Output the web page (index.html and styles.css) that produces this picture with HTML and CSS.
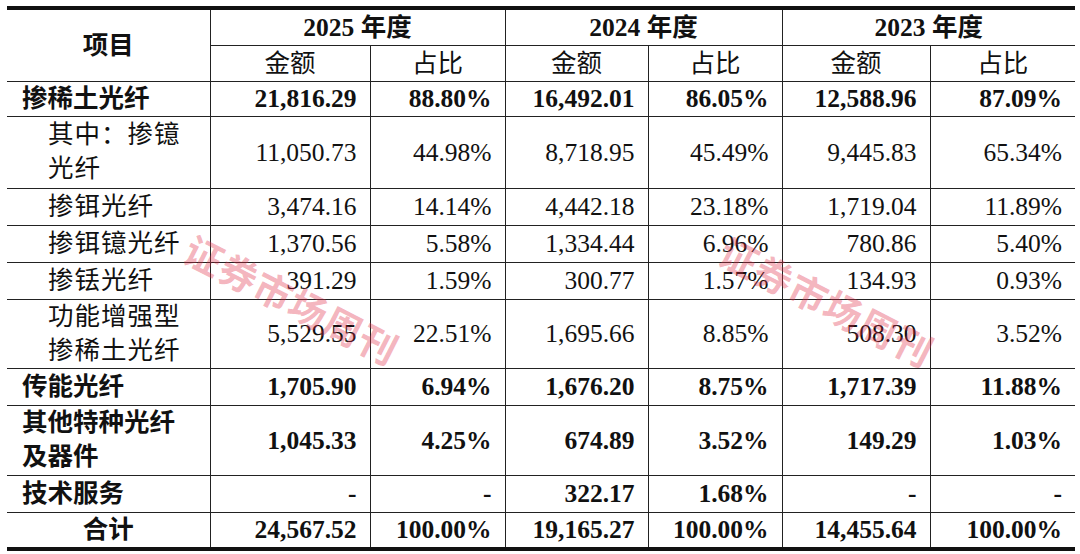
FILE: index.html
```html
<!DOCTYPE html>
<html lang="zh-CN">
<head>
    <meta charset="UTF-8" />
    <meta name="viewport" content="width=device-width, initial-scale=1.0" />
    <title>主营业务收入构成</title>
    <link rel="stylesheet" href="styles.css">
</head>
<body>

<div class="sheet">
    <table class="revenue">
        <colgroup>
            <col class="c-item">
            <col class="c-a1"><col class="c-p1">
            <col class="c-a2"><col class="c-p2">
            <col class="c-a3"><col class="c-p3">
        </colgroup>
        <thead>
            <tr class="h1">
                <th rowspan="2" class="item-head">项目</th>
                <th colspan="2">2025 年度</th>
                <th colspan="2">2024 年度</th>
                <th colspan="2">2023 年度</th>
            </tr>
            <tr class="h2">
                <th>金额</th><th>占比</th>
                <th>金额</th><th>占比</th>
                <th>金额</th><th>占比</th>
            </tr>
        </thead>
        <tbody>
            <tr class="bold first">
                <td class="name">掺稀土光纤</td>
                <td>21,816.29</td><td>88.80%</td>
                <td>16,492.01</td><td>86.05%</td>
                <td>12,588.96</td><td>87.09%</td>
            </tr>
            <tr class="tall t72">
                <td class="name sub">其中：掺镱<br>光纤</td>
                <td>11,050.73</td><td>44.98%</td>
                <td>8,718.95</td><td>45.49%</td>
                <td>9,445.83</td><td>65.34%</td>
            </tr>
            <tr>
                <td class="name sub">掺铒光纤</td>
                <td>3,474.16</td><td>14.14%</td>
                <td>4,442.18</td><td>23.18%</td>
                <td>1,719.04</td><td>11.89%</td>
            </tr>
            <tr>
                <td class="name sub">掺铒镱光纤</td>
                <td>1,370.56</td><td>5.58%</td>
                <td>1,334.44</td><td>6.96%</td>
                <td>780.86</td><td>5.40%</td>
            </tr>
            <tr>
                <td class="name sub">掺铥光纤</td>
                <td>391.29</td><td>1.59%</td>
                <td>300.77</td><td>1.57%</td>
                <td>134.93</td><td>0.93%</td>
            </tr>
            <tr class="tall t68">
                <td class="name sub">功能增强型<br>掺稀土光纤</td>
                <td>5,529.55</td><td>22.51%</td>
                <td>1,695.66</td><td>8.85%</td>
                <td>508.30</td><td>3.52%</td>
            </tr>
            <tr class="bold">
                <td class="name">传能光纤</td>
                <td>1,705.90</td><td>6.94%</td>
                <td>1,676.20</td><td>8.75%</td>
                <td>1,717.39</td><td>11.88%</td>
            </tr>
            <tr class="bold tall">
                <td class="name">其他特种光纤<br>及器件</td>
                <td>1,045.33</td><td>4.25%</td>
                <td>674.89</td><td>3.52%</td>
                <td>149.29</td><td>1.03%</td>
            </tr>
            <tr class="bold">
                <td class="name">技术服务</td>
                <td>-</td><td>-</td>
                <td>322.17</td><td>1.68%</td>
                <td>-</td><td>-</td>
            </tr>
            <tr class="bold total">
                <td class="name">合计</td>
                <td>24,567.52</td><td>100.00%</td>
                <td>19,165.27</td><td>100.00%</td>
                <td>14,455.64</td><td>100.00%</td>
            </tr>
        </tbody>
    </table>

    <div class="stamp stamp-left">证券市场周刊</div>
    <div class="stamp stamp-right">证券市场周刊</div>
</div>

</body>
</html>
```

FILE: styles.css
```css
body {
    margin: 0;
    background-color: #ffffff;
    font-family: "Liberation Serif", "Noto Sans CJK SC", serif;
    color: #111;
}

.sheet {
    position: relative;
    padding: 6px 0 0 7px;
    width: 1068px;
}

.revenue {
    width: 1068px;
    table-layout: fixed;
    border-collapse: collapse;
    font-size: 25.5px;
    border-top: 4px solid #111;
    border-bottom: 4px solid #111;
}

.c-item { width: 203px; }
.c-a1 { width: 160px; }
.c-p1 { width: 135px; }
.c-a2 { width: 143px; }
.c-p2 { width: 134px; }
.c-a3 { width: 148px; }
.c-p3 { width: 145px; }

th, td {
    border: 1px solid #222;
    padding: 0 13px 0 0;
    line-height: 33px;
    white-space: nowrap;
}

th:first-child, td:first-child {
    border-left: none;
}

th:last-child, td:last-child {
    border-right: none;
}

th {
    text-align: center;
    padding: 0;
    font-weight: normal;
}

.h1 {
    height: 37px;
}

.h1 th {
    font-weight: bold;
}

.h2 {
    height: 36px;
}

td {
    text-align: right;
}

tbody tr {
    height: 37px;
}

tbody tr.first {
    height: 35px;
}

tbody tr.tall {
    height: 70px;
}

tbody tr.tall .name {
    line-height: 34px;
}

tbody tr.t72 {
    height: 72px;
}

tbody tr.t68 {
    height: 68px;
}

.name {
    text-align: left;
    padding-left: 15px;
}

.name.sub {
    padding-left: 41px;
    letter-spacing: 1px;
}

.bold td {
    font-weight: bold;
}

.total .name {
    text-align: center;
    padding: 0;
}

.stamp {
    position: absolute;
    font-family: "Noto Sans CJK SC", sans-serif;
    font-weight: bold;
    font-size: 38px;
    letter-spacing: 1px;
    color: rgba(225, 45, 70, 0.36);
    transform: rotate(27deg);
    transform-origin: left center;
    pointer-events: none;
    white-space: nowrap;
}

.stamp-left {
    left: 188px;
    top: 218px;
}

.stamp-right {
    left: 723px;
    top: 220px;
}
```
